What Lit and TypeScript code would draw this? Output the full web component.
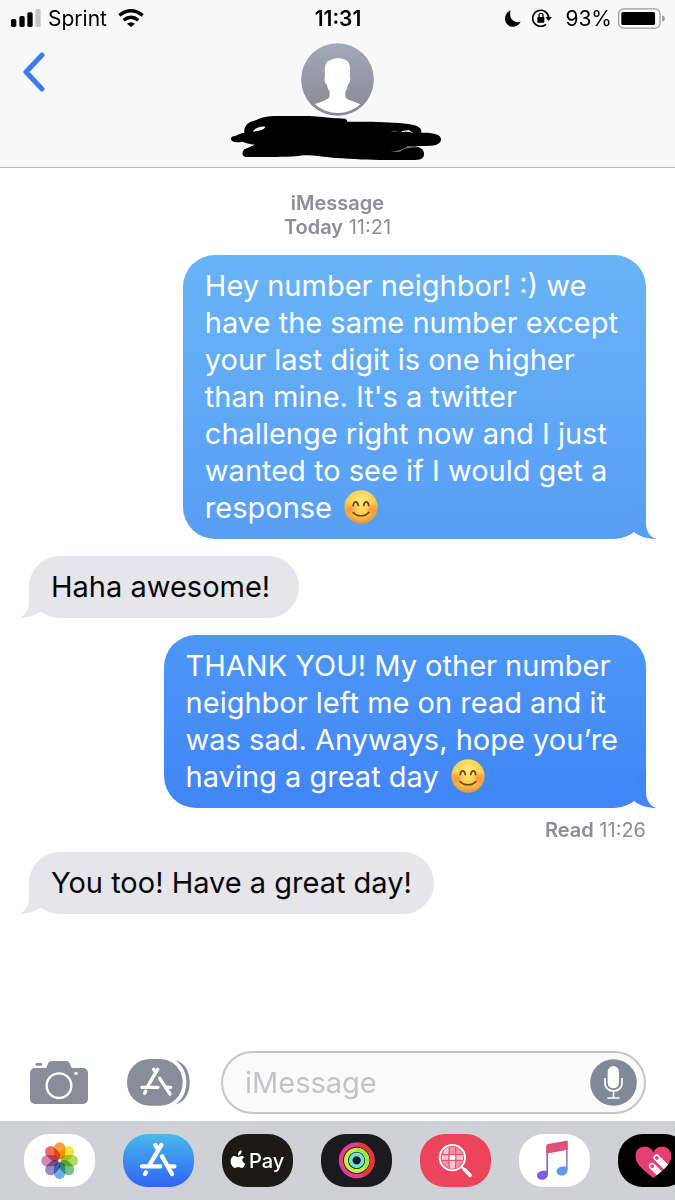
import { LitElement, css, html, nothing, svg } from 'lit';
import { customElement, property } from 'lit/decorators.js';
import { classMap } from 'lit/directives/class-map.js';

interface Message {
  text: string;
  sent?: boolean;
  smile?: boolean;
  tone?: 'light' | 'deep';
  read?: string;
}

const MESSAGES: Message[] = [
  {
    text: "Hey number neighbor! :) we\nhave the same number except\nyour last digit is one higher\nthan mine. It's a twitter\nchallenge right now and I just\nwanted to see if I would get a\nresponse ",
    sent: true,
    smile: true,
    tone: 'light',
  },
  { text: 'Haha awesome!' },
  {
    text: 'THANK YOU! My other number\nneighbor left me on read and it\nwas sad. Anyways, hope you’re\nhaving a great day ',
    sent: true,
    smile: true,
    tone: 'deep',
    read: '11:26',
  },
  { text: 'You too! Have a great day!' },
];

// No whitespace around the svg: the bubble text is rendered with white-space: pre.
const smileIcon = html`<svg class="smile" viewBox="0 0 100 100" role="img" aria-label="😊">
    <defs>
      <radialGradient id="face" cx="50%" cy="32%" r="68%">
        <stop offset="0" stop-color="#fdea7c" />
        <stop offset="0.6" stop-color="#fbcf4c" />
        <stop offset="1" stop-color="#e6952f" />
      </radialGradient>
      <radialGradient id="blush">
        <stop offset="0" stop-color="#f3733c" stop-opacity="0.65" />
        <stop offset="1" stop-color="#f3733c" stop-opacity="0" />
      </radialGradient>
    </defs>
    <circle cx="50" cy="50" r="49" fill="url(#face)" />
    <circle cx="19" cy="57" r="20" fill="url(#blush)" />
    <circle cx="81" cy="57" r="20" fill="url(#blush)" />
    <g fill="none" stroke="#6d4316" stroke-width="5" stroke-linecap="round">
      <path d="M27 46C29 31 40 31 42 46" />
      <path d="M58 46C60 31 71 31 73 46" />
      <path d="M27 66C38 79 62 79 73 66" />
    </g>
  </svg>`;

@customElement('message-bubble')
export class MessageBubble extends LitElement {
  @property({ attribute: false }) message!: Message;

  override render() {
    const { text, sent, smile, tone } = this.message;
    return html`
      <div class=${classMap({ bubble: true, sent: !!sent, light: tone === 'light', deep: tone === 'deep' })}>
        <p class="text">${text}${smile ? smileIcon : nothing}</p>
        <svg class="tail" viewBox="0 0 40 36" aria-hidden="true">
          <path d="M26 0V20C26 28 30 34 36 36C29 36 20 34 14 29L8 24L22 0Z" />
        </svg>
      </div>
    `;
  }

  static override styles = css`
    :host {
      display: block;
    }

    .bubble {
      position: relative;
      box-sizing: border-box;
      min-width: 270px;
      padding: 12px 22px 13px;
      border-radius: 32px;
      background: #e5e5ea;
      color: #050506;
      --tail: #e5e5ea;
    }

    .sent {
      padding-right: 28px;
      color: #fff;
    }

    .light {
      background: linear-gradient(#69b4f7, #579ef5);
      --tail: #579ff5;
    }

    .deep {
      background: linear-gradient(#4d97f7, #4185f6);
      --tail: #4286f6;
    }

    .text {
      margin: 0;
      font-size: 29px;
      line-height: 37px;
      white-space: pre;
    }

    .smile {
      width: 34px;
      height: 34px;
      margin: -6px 0 0 4px;
      vertical-align: -6px;
    }

    .tail {
      position: absolute;
      bottom: 0;
      left: -14px;
      width: 40px;
      height: 36px;
      fill: var(--tail);
      transform: scaleX(-1);
    }

    .sent .tail {
      right: -14px;
      left: auto;
      transform: none;
    }
  `;
}

const storeGlyph = svg`
  <g fill="none" stroke="#fff" stroke-width="10" stroke-linecap="round">
    <path d="M88 31L58 82M52 97L49 103" />
    <path d="M76 31L82 40M94 58L125 105" />
    <path d="M41 85H89M112 85H127" />
  </g>
`;

const petals = ['#f7941e', '#f2e11c', '#a6cf45', '#5dbb6f', '#5aa3dc', '#8277bd', '#c678ae', '#ee5048'];

const dockApps = [
  {
    name: 'Photos',
    art: svg`
      <rect width="213" height="159" rx="74" fill="#fff" />
      <g class="petals">
        ${petals.map(
          (color, i) => svg`<rect x="90" y="25" width="34" height="51" rx="17" fill=${color} opacity="0.86" transform="rotate(${i * 45} 107 80)" />`,
        )}
      </g>
    `,
  },
  {
    name: 'App Store',
    art: svg`
      <defs>
        <linearGradient id="store" x2="0" y2="1">
          <stop offset="0" stop-color="#49b8ec" />
          <stop offset="1" stop-color="#2f64f4" />
        </linearGradient>
      </defs>
      <rect width="213" height="159" rx="74" fill="url(#store)" />
      <g fill="none" stroke="#fff" stroke-width="13" stroke-linecap="round">
        <path d="M115 33L80 92M69 115L66 120" />
        <path d="M97 33L105 46M117 67L147 120" />
        <path d="M57 97H112M139 97H154" />
      </g>
    `,
  },
  {
    name: 'Apple Pay',
    label: 'Pay',
    art: svg`
      <rect width="213" height="159" rx="74" fill="#1b1a17" />
      <path fill="#fff" d="M59 66C54 66 51 69 48 69C45 69 41 66 37 66C31 66 26 72 26 82C26 92 33 102 39 102C43 102 44 99 49 99C54 99 55 102 59 102C64 102 68 95 70 89C64 87 61 82 61 78C61 74 64 71 68 70C65 67 62 66 59 66Z" />
      <path fill="#fff" d="M48 65C47 55 52 50 59 49C60 57 55 64 48 65Z" />
    `,
  },
  {
    name: 'Activity',
    art: svg`
      <rect width="213" height="159" rx="74" fill="#1b1b1f" />
      <g fill="none">
        <circle cx="107" cy="79" r="47" stroke="#e83b91" stroke-width="13" />
        <path d="M113 32A47 47 0 0 1 126 122" stroke="#e6353b" stroke-width="13" />
        <circle cx="107" cy="79" r="32" stroke="#c2f33d" stroke-width="12" />
        <path d="M107 47A32 32 0 0 1 130 101" stroke="#9fe846" stroke-width="12" />
        <circle cx="107" cy="79" r="18" stroke="#62e5dc" stroke-width="11" />
      </g>
    `,
  },
  {
    name: '#images',
    art: svg`
      <defs><clipPath id="lens"><circle cx="97" cy="71" r="33" /></clipPath></defs>
      <rect width="213" height="159" rx="74" fill="#ec445d" />
      <g clip-path="url(#lens)">
        <rect x="64" y="38" width="66" height="66" fill="#f58fa0" />
        <path fill="#f9c7cf" d="M72 38H87V61H72ZM107 63H130V79H107ZM66 63H87V79H66ZM88 81H106V104H88Z" />
        <path fill="#fff" d="M89 63H105V79H89Z" />
        <path fill="none" stroke="#ec445d" stroke-width="3" d="M60 62H134M60 79H134M88 36Q84 71 88 106M106 36Q110 71 106 106" />
      </g>
      <circle cx="97" cy="71" r="38" fill="none" stroke="#fff" stroke-width="6" />
      <path d="M125 99L134 108" stroke="#fff" stroke-width="6" />
      <path d="M134 107L150 124" stroke="#fff" stroke-width="11" stroke-linecap="round" />
    `,
  },
  {
    name: 'Music',
    art: svg`
      <defs>
        <linearGradient id="note" gradientUnits="userSpaceOnUse" x1="85" y1="30" x2="85" y2="136">
          <stop offset="0" stop-color="#e5506d" />
          <stop offset="0.35" stop-color="#b757a8" />
          <stop offset="1" stop-color="#6e62f2" />
        </linearGradient>
        <linearGradient id="noteRight" gradientUnits="userSpaceOnUse" x1="144" y1="20" x2="144" y2="125">
          <stop offset="0.1" stop-color="#df6f91" />
          <stop offset="0.5" stop-color="#9c7bd1" />
          <stop offset="1" stop-color="#45a5f3" />
        </linearGradient>
      </defs>
      <rect width="213" height="159" rx="74" fill="#fff" />
      <path fill="url(#note)" d="M82 34V111C77 109 54 109 54 125C54 142 87 142 87 119V34Z" />
      <path fill="url(#noteRight)" d="M141 24V98C135 96 113 97 113 112C113 130 146 130 146 106V22Z" />
      <path fill="#df5273" d="M82 36Q82 31 87 30L142 20Q146 19 146 24V47L82 59Z" />
    `,
  },
  {
    name: 'Digital Touch',
    art: svg`
      <defs>
        <clipPath id="heart">
          <path d="M106 132C94 122 52 95 52 67C52 35 91 27 106 54C121 27 160 35 160 67C160 95 118 122 106 132Z" />
        </clipPath>
      </defs>
      <rect width="213" height="159" rx="74" fill="#000" />
      <g clip-path="url(#heart)">
        <path d="M50 30H162V134H50Z" fill="#e83e73" />
        <g stroke-linecap="round" stroke-width="19">
          <path d="M116 71L162 117M102 96L148 142" stroke="#fff" />
          <path d="M116 71L117 72M102 96L103 97" stroke="#e83e73" stroke-width="10" />
          <path d="M131 80L125 86M117 105L111 111" stroke="#f3a4bd" stroke-width="2" />
        </g>
      </g>
    `,
  },
];

@customElement('app-root')
export class AppRoot extends LitElement {
  private renderStatusBar() {
    return html`
      <div class="status">
        <div class="status-side">
          <svg width="30" height="18" viewBox="0 0 90 54" role="img" aria-label="Signal">
            <rect y="30" width="16" height="24" rx="5" />
            <rect x="25" y="21" width="16" height="33" rx="5" />
            <rect x="49" y="10" width="16" height="44" rx="5" />
            <rect x="73" width="16" height="54" rx="5" fill="#c4c4c6" />
          </svg>
          <span class="carrier">Sprint</span>
          <svg width="26" height="18" viewBox="0 0 76 54" role="img" aria-label="Wi-Fi">
            <g fill="none" stroke="#000" stroke-width="10">
              <path d="M3 19Q38 -9 73 19" />
              <path d="M16 34Q38 16 60 34" />
            </g>
            <path d="M26 44Q38 35 50 44L38 54Z" />
          </svg>
        </div>
        <time class="clock">11:31</time>
        <div class="status-side end">
          <svg width="16" height="17" viewBox="0 0 48 50" role="img" aria-label="Do not disturb">
            <path d="M17 1C10 23 25 40 47 35C41 47 31 50 24 50C10 50 0 39 0 26C0 14 7 4 17 1Z" />
          </svg>
          <svg class="rotation" width="20" height="18" viewBox="0 0 60 54" role="img" aria-label="Rotation locked">
            <path d="M42 46A24 24 0 1 1 50 25" fill="none" stroke="#000" stroke-width="5" />
            <path d="M40 24H60L50 36Z" />
            <rect x="16" y="24" width="21" height="17" rx="2" />
            <path d="M21 25V19A6 6 0 0 1 33 19V25" fill="none" stroke="#000" stroke-width="4" />
          </svg>
          <span>93%</span>
          <svg width="47" height="21" viewBox="0 0 142 62" role="img" aria-label="Battery">
            <rect x="2" y="2" width="125" height="58" rx="15" fill="#fff" stroke="#9b9b9e" stroke-width="4" />
            <rect x="10" y="11" width="102" height="40" rx="5" />
            <path d="M133 21Q142 24 142 31T133 41Z" fill="#9b9b9e" />
          </svg>
        </div>
      </div>
    `;
  }

  private renderHeader() {
    return html`
      <header class="header">
        ${this.renderStatusBar()}
        <nav class="nav">
          <button class="plain back" type="button" aria-label="Back">
            <svg width="24" height="40" viewBox="0 0 24 40">
              <path d="M20 3L4 20L20 37" fill="none" stroke="#377df0" stroke-width="5" stroke-linecap="round" stroke-linejoin="round" />
            </svg>
          </button>
          <button class="plain contact" type="button" aria-label="Contact">
            <svg width="73" height="73" viewBox="0 0 219 219">
              <defs>
                <linearGradient id="avatar" x2="0" y2="1">
                  <stop offset="0" stop-color="#a4a9b7" />
                  <stop offset="1" stop-color="#858993" />
                </linearGradient>
                <clipPath id="inner"><circle cx="110" cy="109" r="101" /></clipPath>
              </defs>
              <circle cx="109.5" cy="109.5" r="109" fill="url(#avatar)" />
              <path clip-path="url(#inner)" fill="#fff" d="M30 191C45 178 70 176 84 164C87 158 86 149 85 143C80 138 79 130 77 124C70 121 69 104 72 101C69 64 76 54 90 51C103 41 145 43 146 69C148 79 147 92 146 101C150 104 147 122 141 124C140 132 138 140 134 144C132 152 132 160 135 165C149 176 170 177 190 191V219H30Z" />
            </svg>
            <svg width="214" height="45" viewBox="18 24 642 135">
              <path d="M26 85C38 83 42 75 58 75C56 52 70 42 92 37C110 27 130 24 155 24H240C280 24 300 30 361 32Q367 35 367 41H440C490 43 530 44 562 50C585 55 591 64 589 74C628 73 649 80 648 95C646 111 625 114 596 114H566C590 117 599 128 597 141C594 156 582 156 550 156H480C430 156 390 153 330 150C290 146 250 139 225 143C190 147 140 147 62 147C50 146 50 132 58 124L90 110Q65 107 53 101C30 105 18 101 18 93C18 88 21 86 26 85Z" />
              <path d="M83 71Q96 53 122 56Q117 67 83 71Z" fill="#f8f8f9" />
              <path d="M531 69L552 66L564 75Q548 69 531 72Z" fill="#f8f8f9" />
              <path d="M496 72L512 67L520 71Z" fill="#4a4a4b" />
              <path d="M495 132Q525 130 548 115Q565 114 578 118Q535 119 526 131Z" fill="#77777a" />
            </svg>
          </button>
        </nav>
      </header>
    `;
  }

  private renderThread() {
    return html`
      <main class="thread">
        <div class="stamp">
          <strong>iMessage</strong>
          <span><strong>Today</strong> 11:21</span>
        </div>
        ${MESSAGES.map(
          (message) => html`
            <message-bubble class=${classMap({ message: true, mine: !!message.sent })} .message=${message}></message-bubble>
            ${message.read ? html`<div class="receipt"><strong>Read</strong> ${message.read}</div>` : nothing}
          `,
        )}
      </main>
    `;
  }

  private renderComposer() {
    return html`
      <form class="composer" @submit=${(e: Event) => e.preventDefault()}>
        <button class="plain" type="button" aria-label="Camera">
          <svg width="58" height="46" viewBox="0 0 174 138">
            <g fill="#878e9a">
              <rect y="24" width="174" height="108" rx="15" />
              <path d="M46 25C55 22 50 3 66 3H108C124 3 119 22 128 25Z" />
              <rect x="17" y="9" width="19" height="8" rx="2" />
            </g>
            <circle cx="87" cy="77" r="37" fill="none" stroke="#fff" stroke-width="7" />
            <circle cx="138" cy="40" r="5" fill="#fff" />
          </svg>
        </button>
        <button class="plain apps" type="button" aria-label="Apps">
          <svg width="63" height="47" viewBox="-4 0 189 141">
            <g fill="#878e9a">
              <rect x="-4" width="167" height="140" rx="68" />
              <path d="M140 4C174 12 184 42 184 70C184 98 174 128 140 137C163 124 174 98 174 70C174 42 163 17 140 4Z" />
            </g>
            ${storeGlyph}
          </svg>
        </button>
        <div class="field">
          <input class="input" type="text" placeholder="iMessage" aria-label="iMessage" />
          <button class="plain" type="button" aria-label="Record audio">
            <svg width="47" height="47" viewBox="0 0 141 141">
              <circle cx="70.5" cy="70.5" r="70" fill="#828996" />
              <rect x="53" y="21" width="34" height="67" rx="17" fill="#fff" />
              <path d="M45 57V72C45 104 96 104 96 72V57M70.5 97V117M52 117H89" fill="none" stroke="#fff" stroke-width="5" />
            </svg>
          </button>
        </div>
      </form>
    `;
  }

  override render() {
    return html`
      ${this.renderHeader()} ${this.renderThread()} ${this.renderComposer()}
      <nav class="dock" aria-label="Apps">
        ${dockApps.map(
          (app) => html`
            <button class="plain app" type="button" aria-label=${app.name}>
              <svg width="71" height="53" viewBox="0 0 213 159">${app.art}</svg>
              ${app.label ? html`<span class="app-label">${app.label}</span>` : nothing}
            </button>
          `,
        )}
      </nav>
    `;
  }

  static override styles = css`
    :host {
      display: flex;
      flex-direction: column;
      min-height: 100vh;
      overflow: hidden;
      background: #fff;
      color: #000;
      font-family: Inter, 'Liberation Sans', sans-serif;
    }

    svg {
      display: block;
      flex: none;
    }

    .plain {
      display: block;
      flex: none;
      padding: 0;
      border: 0;
      background: none;
      font: inherit;
    }

    .header {
      padding-bottom: 6px;
      border-bottom: 1px solid #b9b9bc;
      background: #f8f8f9;
    }

    .status {
      display: grid;
      grid-template-columns: 1fr auto 1fr;
      align-items: center;
      height: 36px;
      padding: 0 10px 0 11px;
      font-size: 21px;
    }

    .status-side {
      display: flex;
      align-items: center;
      gap: 6px;
    }

    .carrier {
      margin: 0 5px 0 1px;
    }

    .end {
      justify-content: flex-end;
    }

    .rotation {
      margin: 0 7px 0 5px;
    }

    .clock {
      font-weight: 600;
    }

    .nav {
      display: grid;
      grid-template-columns: 1fr auto 1fr;
      align-items: start;
      padding: 7px 22px 0;
    }

    .back {
      justify-self: start;
      padding-top: 9px;
    }

    .contact {
      display: flex;
      flex-direction: column;
      align-items: center;
    }

    .thread {
      display: flex;
      flex: 1;
      flex-direction: column;
      align-items: flex-start;
      padding: 23px 29px;
    }

    .stamp {
      display: flex;
      flex-direction: column;
      align-self: center;
      align-items: center;
      color: #8e8e93;
      font-size: 20px;
      line-height: 24px;
    }

    strong {
      font-weight: 600;
    }

    .message {
      margin-top: 17px;
    }

    .stamp + .message {
      margin-top: 16px;
    }

    .mine {
      align-self: flex-end;
    }

    .receipt {
      align-self: flex-end;
      margin-top: 10px;
      color: #8e8e93;
      font-size: 20px;
      line-height: 24px;
    }

    .receipt + .message {
      margin-top: 10px;
    }

    .composer {
      display: flex;
      align-items: center;
      padding: 0 29px 7px 30px;
    }

    .apps {
      margin: 0 31px 0 39px;
    }

    .field {
      display: flex;
      flex: 1;
      align-items: center;
      box-sizing: border-box;
      min-width: 0;
      height: 63px;
      padding: 0 7px 0 22px;
      border: 2px solid #c7c5ca;
      border-radius: 32px;
      background: #fafafa;
    }

    .input {
      flex: 1;
      min-width: 0;
      padding: 0;
      border: 0;
      outline: 0;
      background: none;
      font: inherit;
      font-size: 29px;
    }

    .input::placeholder {
      color: #c3c3c8;
      opacity: 1;
    }

    .dock {
      display: flex;
      gap: 28px;
      padding: 13px 0 13px 24px;
      overflow: hidden;
      background: #d0d1d7;
    }

    .app {
      display: grid;
      justify-items: start;
    }

    .app > * {
      grid-area: 1 / 1;
    }

    .app-label {
      align-self: center;
      padding-left: 27px;
      color: #fff;
      font-size: 20px;
      font-weight: 500;
      line-height: 24px;
    }

    .petals rect {
      mix-blend-mode: multiply;
    }
  `;
}
